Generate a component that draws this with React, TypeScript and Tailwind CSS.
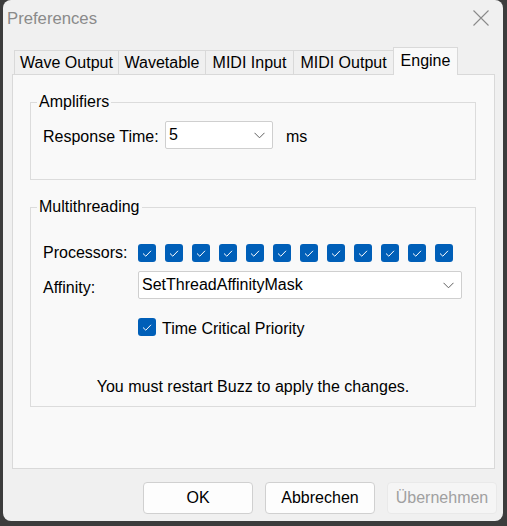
import React from "react";

const font = { fontFamily: '"Liberation Sans", Arial, sans-serif' };

function Check() {
  return (
    <div className="w-[18px] h-[18px] rounded-[3px] bg-[#005fb8] flex items-center justify-center shrink-0">
      <svg width="18" height="18" viewBox="0 0 18 18">
        <polyline points="5,9.5 7.8,12.2 13,6.8" fill="none" stroke="#ffffff" strokeWidth="1" />
      </svg>
    </div>
  );
}

function Chevron() {
  return (
    <svg width="11" height="7" viewBox="0 0 11 7">
      <path d="M0.5 0.8 L5.5 5.8 L10.5 0.8" fill="none" stroke="#5f5f5f" strokeWidth="1" />
    </svg>
  );
}

function Combo({ value, width, padR }: { value: string; width: string; padR: string }) {
  return (
    <div
      className={`${width} h-[28px] bg-white border border-[#cfcfcf] rounded-[2px] flex items-center justify-between pl-[3px] ${padR}`}
    >
      <span>{value}</span>
      <Chevron />
    </div>
  );
}

const tabs = [
  { label: "Wave Output", w: "w-[104px]" },
  { label: "Wavetable", w: "w-[87px]" },
  { label: "MIDI Input", w: "w-[88px]" },
  { label: "MIDI Output", w: "w-[100px]" },
];

export default function App() {
  return (
    <div className="w-[507px] h-[526px] bg-[#3c3c3c] text-[16px] text-black" style={font}>
      <div className="ml-[3px] w-[500px] h-[521px] bg-[#f0f0f0] rounded-[8px] flex flex-col">
        {/* Title bar */}
        <div className="h-[36px] flex items-center justify-between pl-[4px] pr-[14px]">
          <span className="text-[16.7px] text-[#8a8a8a] leading-[20px] pt-[1px]">Preferences</span>
          <svg width="16" height="16" viewBox="0 0 16 16">
            <path d="M0.5 0.5 L15.5 15.5 M15.5 0.5 L0.5 15.5" stroke="#8a8a8a" strokeWidth="1.1" fill="none" />
          </svg>
        </div>

        {/* Tabs */}
        <div className="mt-[11px] h-[28px] flex items-end pl-[11px] relative z-10">
          {tabs.map((t) => (
            <div
              key={t.label}
              className={`${t.w} h-[24px] mb-[1px] border-t border-l border-[#d9d9d9] bg-[#f0f0f0] flex items-center justify-center leading-[18px]`}
            >
              {t.label}
            </div>
          ))}
          <div className="w-[65px] h-[28px] border-t border-l border-r border-[#d9d9d9] bg-[#f9f9f9] flex items-center justify-center leading-[18px] pb-[1px]">
            Engine
          </div>
        </div>

        {/* Panel */}
        <div className="ml-[9px] -mt-[1px] w-[483px] h-[395px] border border-[#d9d9d9] bg-[#f9f9f9] flex flex-col">
          <fieldset className="mt-[18px] ml-[17px] w-[446px] border border-[#dcdcdc] pl-[6px] pt-[10px] pb-[30px]">
            <legend className="px-[2px] leading-[18px]">Amplifiers</legend>
            <div className="flex items-center ml-[6px] h-[28px]">
              <div className="w-[122px] pt-[4px]">Response Time:</div>
              <Combo value="5" width="w-[108px]" padR="pr-[7px]" />
              <span className="ml-[13px] pt-[4px]">ms</span>
            </div>
          </fieldset>

          <fieldset className="mt-[18px] ml-[17px] w-[446px] border border-[#dcdcdc] pl-[6px] pt-[28px] pb-[9px]">
            <legend className="px-[2px] leading-[18px]">Multithreading</legend>
            <div className="flex items-center ml-[6px] h-[18px]">
              <div className="w-[95px] leading-[18px]">Processors:</div>
              <div className="flex gap-[9px]">
                {Array.from({ length: 12 }).map((_, i) => (
                  <Check key={i} />
                ))}
              </div>
            </div>
            <div className="flex items-center ml-[6px] mt-[9px] h-[28px]">
              <div className="w-[95px] pt-[5px]">Affinity:</div>
              <Combo value="SetThreadAffinityMask" width="w-[324px]" padR="pr-[7px]" />
            </div>
            <div className="flex items-center ml-[101px] mt-[19px] h-[18px]">
              <Check />
              <span className="ml-[6px] leading-[18px] pt-[3px]">Time Critical Priority</span>
            </div>
            <div className="mt-[42px] text-center leading-[18px] pr-[6px] pb-[1px]">
              You must restart Buzz to apply the changes.
            </div>
          </fieldset>
        </div>

        {/* Buttons */}
        <div className="mt-[13px] flex justify-end gap-[12px] pr-[6px]">
          <div className="w-[110px] h-[32px] rounded-[4px] border border-[#d0d0d0] bg-[#fdfdfd] flex items-center justify-center">
            OK
          </div>
          <div className="w-[110px] h-[32px] rounded-[4px] border border-[#d0d0d0] bg-[#fdfdfd] flex items-center justify-center">
            Abbrechen
          </div>
          <div className="w-[110px] h-[32px] rounded-[4px] border border-[#e9e9e9] bg-[#f5f5f5] text-[#a0a0a0] flex items-center justify-center">
            Übernehmen
          </div>
        </div>
      </div>
    </div>
  );
}
